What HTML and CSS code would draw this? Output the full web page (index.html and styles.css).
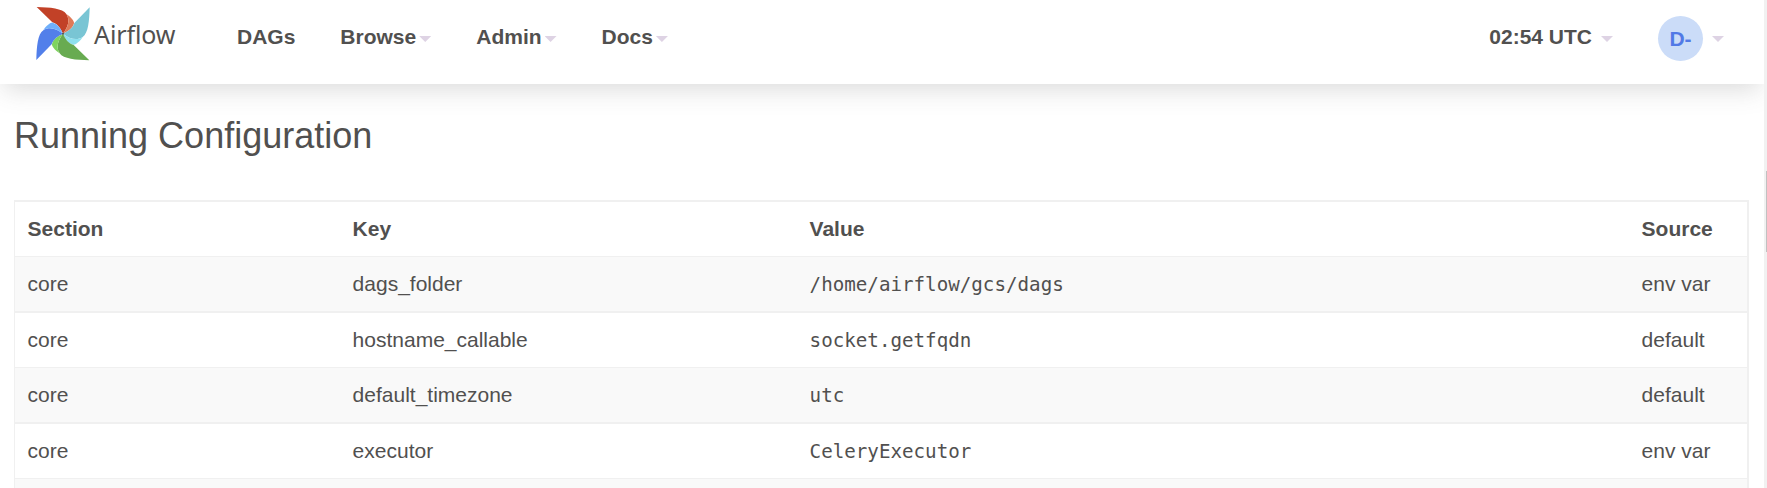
FILE: index.html
```html
<!DOCTYPE html>
<html lang="en">
<head>
<meta charset="utf-8">
<title>Airflow</title>
<link rel="stylesheet" href="styles.css">
</head>
<body>
<div class="page">
  <nav class="navbar">
    <a class="brand">
      <svg class="logo" viewBox="0 0 198 198" aria-hidden="true">
        <g>
          <path fill="#c24127" d="M20 21C60 22 98 25 109 42C121 60 114 82 99 101C92 86 84 72 67 67Z"/>
          <path fill="#df7a58" d="M109 42C124 51 134 66 132 70C128 86 114 94 99 101C114 82 121 60 109 42Z"/>
        </g>
        <g transform="rotate(90 99 101)">
          <path fill="#79c5d4" d="M20 21C60 22 98 25 109 42C121 60 114 82 99 101C92 86 84 72 67 67Z"/>
          <path fill="#8fe0ee" d="M109 42C124 51 134 66 132 70C128 86 114 94 99 101C114 82 121 60 109 42Z"/>
        </g>
        <g transform="rotate(180 99 101)">
          <path fill="#68ab51" d="M20 21C60 22 98 25 109 42C121 60 114 82 99 101C92 86 84 72 67 67Z"/>
          <path fill="#7fd35f" d="M109 42C124 51 134 66 132 70C128 86 114 94 99 101C114 82 121 60 109 42Z"/>
        </g>
        <g transform="rotate(270 99 101)">
          <path fill="#527fea" d="M20 21C60 22 98 25 109 42C121 60 114 82 99 101C92 86 84 72 67 67Z"/>
          <path fill="#70b0fb" d="M109 42C124 51 134 66 132 70C128 86 114 94 99 101C114 82 121 60 109 42Z"/>
        </g>
        <circle cx="99" cy="101" r="3" fill="#51504f"/>
      </svg>
      <span class="brand-name">Airflow</span>
    </a>
    <ul class="menu">
      <li>DAGs</li>
      <li>Browse<b class="caret"></b></li>
      <li>Admin<b class="caret"></b></li>
      <li>Docs<b class="caret"></b></li>
    </ul>
    <div class="clock">02:54 UTC<b class="caret"></b></div>
    <div class="user"><span class="avatar">D-</span><b class="caret"></b></div>
  </nav>
  <main class="content">
    <h2>Running Configuration</h2>
    <div class="table">
      <div class="row head"><span>Section</span><span>Key</span><span>Value</span><span>Source</span></div>
      <div class="row"><span>core</span><span>dags_folder</span><code>/home/airflow/gcs/dags</code><span>env var</span></div>
      <div class="row"><span>core</span><span>hostname_callable</span><code>socket.getfqdn</code><span>default</span></div>
      <div class="row"><span>core</span><span>default_timezone</span><code>utc</code><span>default</span></div>
      <div class="row"><span>core</span><span>executor</span><code>CeleryExecutor</code><span>env var</span></div>
      <div class="row"></div>
    </div>
  </main>
</div>
<div class="scrollbar"><div class="thumb"></div></div>
</body>
</html>
```
FILE: styles.css
```css
* { box-sizing: border-box; }

body {
  margin: 0;
  height: 488px;
  overflow: hidden;
  display: flex;
  background: #fff;
  color: #51504f;
  font: 21px/30px "Liberation Sans", Arial, sans-serif;
}

.page { width: 1764px; height: 488px; overflow: hidden; }

.navbar {
  display: flex;
  height: 84px;
  padding-left: 30px;
  background: #fff;
  font-weight: bold;
  box-shadow: 0 9px 24px -4px rgba(81, 80, 79, 0.21);
  white-space: nowrap;
}

.brand { display: flex; width: 207px; }
.logo { width: 66px; height: 66px; flex: none; }
.brand-name {
  margin: 16px 0 0 -2px;
  font: 25px/36px "Noto Sans", sans-serif;
  letter-spacing: -0.1px;
}

.menu {
  display: flex;
  gap: 45px;
  margin: 0;
  padding: 22px 0 0;
  list-style: none;
}
.menu li { display: flex; }

.caret {
  width: 12px;
  height: 6px;
  margin: 14px 0 0 3px;
  background: #ded3e4;
  clip-path: polygon(0 0, 100% 0, 50% 100%);
}

.clock { display: flex; margin-left: auto; padding-top: 22px; }
.clock .caret { margin-left: 9px; }

.user { display: flex; margin: 0 40px 0 45px; padding-top: 16px; }
.user .caret { margin: 20px 0 0 9px; }
.avatar {
  width: 45px;
  height: 45px;
  border-radius: 50%;
  background: #cbdcf8;
  color: #5179e6;
  line-height: 46px;
  text-align: center;
}

.content { padding: 31px 15px 0 14px; }

h2 {
  margin: 0 0 43px;
  font-size: 36px;
  line-height: 42px;
  font-weight: normal;
}

.table { border: solid #f0f0f0; border-width: 2px 2px 0 1px; }
.row {
  display: grid;
  grid-template-columns: 325px 457px 832px 1fr;
  height: 55px;
  padding: 12px 0 0 12.6px;
  border-bottom: 1px solid #f0f0f0;
}
.row:nth-child(even) {
  height: 56px;
  background: #f9f9f9;
  border-bottom-width: 2px;
}
.head { font-weight: bold; }
code { padding-top: 1px; font: 19.2px/30px "DejaVu Sans Mono", monospace; }

.scrollbar { width: 3px; height: 488px; padding: 171px 0 0 2px; background: #f1f1f1; }
.thumb { height: 81px; background: #c1c1c1; }
```
